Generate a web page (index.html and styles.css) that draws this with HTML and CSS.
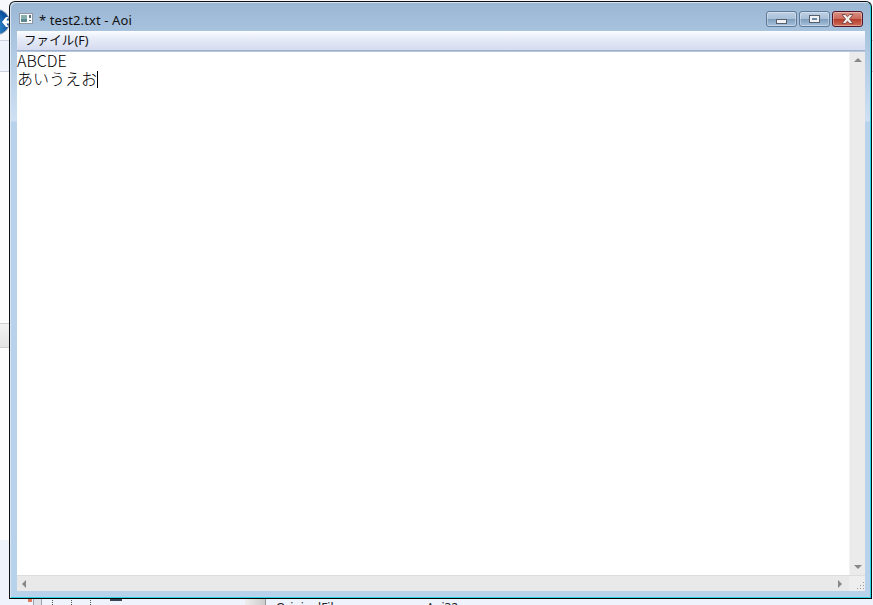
FILE: index.html
```html
<!DOCTYPE html>
<html lang="ja">
<head>
    <meta charset="UTF-8">
    <title>* test2.txt - Aoi</title>
    <link rel="stylesheet" href="styles.css">
</head>
<body>
    <div class="desktop">
        <svg class="back-button" width="10" height="26" viewBox="0 0 10 26">
            <defs>
                <radialGradient id="backFill" cx="0.2" cy="0.75" r="0.8">
                    <stop offset="0" stop-color="#4fb4f0"/>
                    <stop offset="1" stop-color="#0a4f9c"/>
                </radialGradient>
            </defs>
            <circle cx="-3" cy="13" r="12.500" fill="url(#backFill)" stroke="#8ea0b4"/>
            <path d="M2 13l4-5h2.500l-2 3.500H9v3H6.500l2 3.500H6z" fill="#ffffff"/>
        </svg>
        <div class="side-strip"></div>
        <div class="behind-mark"></div>
        <div class="behind-panel"></div>
        <div class="behind-dots dots-1"></div>
        <div class="behind-dots dots-2"></div>
        <div class="behind-dots dots-3"></div>
        <div class="behind-bar"></div>
        <div class="behind-head"></div>
        <div class="behind-text"><span>OriginalFilename</span><span>Aoi32</span></div>

        <div class="window">
            <div class="titlebar">
                <svg class="app-icon" width="14" height="11" viewBox="0 0 14 11">
                    <rect x="0.5" y="0.5" width="13" height="10" fill="#f8f9fa" stroke="#8d98a3"/>
                    <rect x="2" y="2" width="6" height="7" fill="#86aeaa"/>
                    <rect x="2" y="6" width="6" height="3" fill="#5b8790"/>
                    <rect x="10" y="2" width="2" height="3" fill="#5a6b7c"/>
                    <rect x="10" y="7" width="2" height="1" fill="#5a6b7c"/>
                </svg>
                <span class="title">* test2.txt - Aoi</span>
                <div class="buttons">
                    <div class="btn"><span class="min-glyph"></span></div>
                    <div class="btn"><span class="max-glyph"></span></div>
                    <div class="btn btn-close">
                        <svg width="13" height="10" viewBox="0 0 13 10">
                            <path d="M1 .5h3.200l2.300 2.200L8.800.5H12L8.500 5 12 9.500H8.800L6.500 7.300 4.200 9.500H1L4.500 5z" fill="#f3f0f0" stroke="#6d3b3b" stroke-width="0.8"/>
                        </svg>
                    </div>
                </div>
            </div>
            <div class="client">
                <div class="menubar"><span class="menu-item">ファイル(F)</span></div>
                <div class="editor-row">
                    <div class="editor">
                        <div class="editor-text">
                            <div>ABCDE</div>
                            <div>あいうえお<span class="caret"></span></div>
                        </div>
                    </div>
                    <div class="vscroll">
                        <span class="arrow-up"></span>
                        <span class="arrow-down"></span>
                    </div>
                </div>
                <div class="hscroll-row">
                    <div class="hscroll">
                        <span class="arrow-left"></span>
                        <span class="arrow-right"></span>
                    </div>
                    <div class="grip">
                        <svg width="10" height="10" viewBox="0 0 10 10">
                            <path d="M8 1h1v1H8zM5 4h1v1H5zM8 4h1v1H8zM2 7h1v1H2zM5 7h1v1H5zM8 7h1v1H8z" fill="#9a9a9a"/>
                        </svg>
                    </div>
                </div>
            </div>
        </div>
    </div>
</body>
</html>
```

FILE: styles.css
```css
html, body {
    margin: 0;
    padding: 0;
}
body {
    font-family: "Noto Sans", "Noto Sans CJK JP", sans-serif;
    background-color: #ffffff;
}
.desktop {
    position: relative;
    width: 873px;
    height: 605px;
    overflow: hidden;
    background: linear-gradient(to bottom,
        #f6f8fc 0, #f6f8fc 40px,
        #c9d2de 40px, #c9d2de 41px,
        #eef2fa 41px, #eef2fa 71px,
        #c9d2de 71px, #c9d2de 72px,
        #fdfdfd 72px, #fdfdfd 540px,
        #eff3fb 540px, #eff3fb 100%);
}
.back-button {
    position: absolute;
    left: 0;
    top: 9px;
}
.side-strip {
    position: absolute;
    left: 0;
    top: 323px;
    width: 9px;
    height: 23px;
    background: linear-gradient(to bottom, #f2f2f2, #e4e4e4);
    border-top: 1px solid #d0d0d0;
    border-bottom: 1px solid #d0d0d0;
}
.behind-mark {
    position: absolute;
    left: 28px;
    top: 599px;
    width: 4px;
    height: 3px;
    background-color: #e0785c;
}
.behind-panel {
    position: absolute;
    left: 33px;
    top: 599px;
    width: 7px;
    height: 6px;
    background-color: #dfe3e8;
    border-left: 1px solid #9aa2ac;
    border-right: 1px solid #9aa2ac;
}
.behind-dots {
    position: absolute;
    top: 600px;
    width: 1px;
    height: 5px;
    background: repeating-linear-gradient(to bottom, #555555 0, #555555 1px, transparent 1px, transparent 2px);
}
.dots-1 {
    left: 52px;
}
.dots-2 {
    left: 71px;
}
.dots-3 {
    left: 90px;
}
.behind-bar {
    position: absolute;
    left: 110px;
    top: 599px;
    width: 12px;
    height: 2px;
    background-color: #3a4656;
}
.behind-head {
    position: absolute;
    left: 245px;
    top: 599px;
    width: 20px;
    height: 6px;
    background: linear-gradient(to right, #eeeeee, #cccccc);
    border-right: 1px solid #999999;
}
.behind-text {
    position: absolute;
    left: 276px;
    top: 600px;
    display: flex;
    gap: 54px;
    font-size: 12px;
    line-height: 16px;
    color: #222222;
}
.window {
    position: absolute;
    left: 9px;
    top: 1px;
    width: 863px;
    height: 598px;
    box-sizing: border-box;
    display: flex;
    flex-direction: column;
    padding: 0 6px 7px 7px;
    border: 1px solid #101010;
    border-bottom-color: #000000;
    border-radius: 6px 6px 0 0;
    box-shadow: inset 1px 1px 0 #d6e6f4, inset -1px -1px 0 #28d4e4;
    background: linear-gradient(to bottom, #9ab6d3 0, #a8c3de 30px, #cfe0f3 119px, #b8d2ec 120px, #b8d2ec 100%);
}
.titlebar {
    display: flex;
    align-items: center;
    height: 29px;
    flex-shrink: 0;
    box-sizing: border-box;
    padding-top: 6px;
}
.app-icon {
    margin-left: 2px;
    margin-top: -2px;
}
.title {
    margin-left: 6px;
    font-size: 13px;
    letter-spacing: 0.1px;
    color: #111111;
}
.buttons {
    margin-left: auto;
    margin-right: 2px;
    margin-top: -1px;
    display: flex;
    gap: 2px;
}
.btn {
    width: 31px;
    height: 16px;
    box-sizing: border-box;
    display: flex;
    align-items: center;
    justify-content: center;
    border: 1px solid #5f7a98;
    border-radius: 3px;
    box-shadow: inset 0 0 0 1px rgba(255, 255, 255, 0.35);
    background: linear-gradient(to bottom, #bdd0e4 0, #a9c0d9 48%, #7f9dbd 52%, #a6c2dc 100%);
}
.btn-close {
    border-color: #50182a;
    background: linear-gradient(to bottom, #d98f82 0, #c96a5c 48%, #b43c2c 52%, #cf6e58 100%);
}
.min-glyph {
    display: block;
    width: 9px;
    height: 3px;
    margin-top: 5px;
    background-color: #f0f2f5;
    border: 1px solid #56606c;
}
.max-glyph {
    display: block;
    width: 5px;
    height: 2px;
    background-color: #6d87a3;
    border: 2px solid #f0f2f5;
    outline: 1px solid #56606c;
}
.client {
    flex: 1;
    min-height: 0;
    display: flex;
    flex-direction: column;
}
.menubar {
    height: 20px;
    flex-shrink: 0;
    box-sizing: border-box;
    padding-left: 7px;
    font-size: 12.500px;
    letter-spacing: 0.1px;
    line-height: 19px;
    color: #111111;
    border-bottom: 1px solid #a6adc6;
    background: linear-gradient(to bottom, #fbfdff 0, #e6ebf7 40%, #d5dcf0 100%);
}
.editor-row {
    flex: 1;
    min-height: 0;
    display: flex;
    margin-top: 1px;
}
.editor {
    flex: 1;
    background-color: #ffffff;
    font-family: "Noto Sans CJK JP", sans-serif;
    font-weight: 300;
    font-size: 16px;
    line-height: 18px;
    color: #000000;
}
.editor-text {
    margin-top: -1px;
}
.caret {
    display: inline-block;
    width: 1px;
    height: 17px;
    vertical-align: -3px;
    background-color: #000000;
}
.vscroll {
    width: 16px;
    flex-shrink: 0;
    display: flex;
    flex-direction: column;
    align-items: center;
    justify-content: space-between;
    padding: 6px 0;
    box-sizing: border-box;
    border-left: 1px solid #f2f2f2;
    background-color: #ebebeb;
}
.hscroll-row {
    height: 15px;
    flex-shrink: 0;
    display: flex;
    border-top: 1px solid #dddddd;
}
.hscroll {
    flex: 1;
    display: flex;
    align-items: center;
    justify-content: space-between;
    padding: 0 7px 0 5px;
    background-color: #e9e9e9;
}
.grip {
    width: 16px;
    flex-shrink: 0;
    display: flex;
    align-items: flex-end;
    justify-content: flex-end;
    background-color: #eeeeee;
}
.arrow-up, .arrow-down, .arrow-left, .arrow-right {
    display: block;
    width: 0;
    height: 0;
    border-style: solid;
    border-color: transparent;
}
.arrow-up {
    border-width: 0 4px 4px;
    border-bottom-color: #888888;
}
.arrow-down {
    border-width: 4px 4px 0;
    border-top-color: #888888;
}
.arrow-left {
    border-width: 4px 4px 4px 0;
    border-right-color: #888888;
}
.arrow-right {
    border-width: 4px 0 4px 4px;
    border-left-color: #888888;
}
```
